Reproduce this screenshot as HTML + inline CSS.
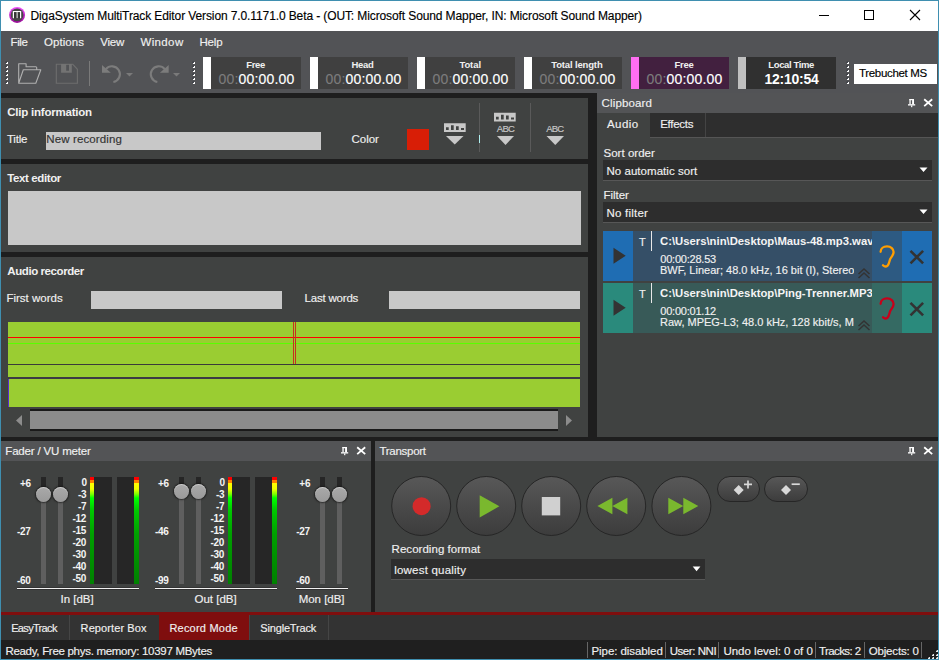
<!DOCTYPE html>
<html><head><meta charset="utf-8">
<style>
*{margin:0;padding:0;box-sizing:border-box}
html,body{width:939px;height:660px;overflow:hidden;background:#1e1e1e;font-family:"Liberation Sans",sans-serif;font-size:12px;color:#f0f0f0}
.a{position:absolute}
.t{position:absolute;white-space:nowrap;line-height:1;-webkit-text-stroke:0.15px currentColor}
.t[style*="bold"]{-webkit-text-stroke:0}
svg{position:absolute;overflow:visible}
</style></head><body>
<!-- window border -->
<div class="a" style="left:0;top:0;width:939px;height:660px;background:#3f8fb0"></div>
<div class="a" style="left:1px;top:1px;width:937px;height:658px;background:#1e1e1e"></div>
<!-- title bar -->
<div class="a" style="left:1px;top:1px;width:937px;height:30px;background:#fff"></div>
<svg style="left:0;top:0" width="939" height="31">
 <defs><linearGradient id="ring" x1="0" y1="0" x2="0" y2="1"><stop offset="0" stop-color="#f050ff"/><stop offset="1" stop-color="#9a0898"/></linearGradient></defs>
 <circle cx="17.1" cy="14.9" r="8" fill="url(#ring)"/>
 <circle cx="17.1" cy="14.9" r="6.4" fill="#464646"/>
 <path d="M13.4 18.2V11.6h7.2v6.6" fill="none" stroke="#fff" stroke-width="1.2"/>
 <rect x="16.2" y="12.2" width="1.8" height="5.9" fill="#a8a8a8"/>
 <rect x="14" y="12.2" width="2.2" height="5.9" fill="#363636"/>
 <rect x="18" y="12.2" width="2" height="5.9" fill="#363636"/>
 <path d="M819 15.5h10" stroke="#000" stroke-width="1"/>
 <rect x="864.5" y="10.5" width="9" height="9" fill="none" stroke="#000" stroke-width="1"/>
 <path d="M910 10l10 10M920 10l-10 10" stroke="#000" stroke-width="1.1"/>
</svg>
<!-- menu + toolbar -->
<div class="a" style="left:1px;top:31px;width:937px;height:62px;background:#525356"></div>
<!-- toolbar widgets -->
<svg style="left:0;top:0" width="939" height="93">
 <g><rect x="6" y="62" width="2" height="2" fill="#fff"/><rect x="5.7" y="61.7" width="1.2" height="1.2" fill="#1a1f2a"/><rect x="6" y="66" width="2" height="2" fill="#fff"/><rect x="5.7" y="65.7" width="1.2" height="1.2" fill="#1a1f2a"/><rect x="6" y="70" width="2" height="2" fill="#fff"/><rect x="5.7" y="69.7" width="1.2" height="1.2" fill="#1a1f2a"/><rect x="6" y="74" width="2" height="2" fill="#fff"/><rect x="5.7" y="73.7" width="1.2" height="1.2" fill="#1a1f2a"/><rect x="6" y="78" width="2" height="2" fill="#fff"/><rect x="5.7" y="77.7" width="1.2" height="1.2" fill="#1a1f2a"/><rect x="6" y="82" width="2" height="2" fill="#fff"/><rect x="5.7" y="81.7" width="1.2" height="1.2" fill="#1a1f2a"/><rect x="193" y="62" width="2" height="2" fill="#fff"/><rect x="192.7" y="61.7" width="1.2" height="1.2" fill="#1a1f2a"/><rect x="193" y="66" width="2" height="2" fill="#fff"/><rect x="192.7" y="65.7" width="1.2" height="1.2" fill="#1a1f2a"/><rect x="193" y="70" width="2" height="2" fill="#fff"/><rect x="192.7" y="69.7" width="1.2" height="1.2" fill="#1a1f2a"/><rect x="193" y="74" width="2" height="2" fill="#fff"/><rect x="192.7" y="73.7" width="1.2" height="1.2" fill="#1a1f2a"/><rect x="193" y="78" width="2" height="2" fill="#fff"/><rect x="192.7" y="77.7" width="1.2" height="1.2" fill="#1a1f2a"/><rect x="193" y="82" width="2" height="2" fill="#fff"/><rect x="192.7" y="81.7" width="1.2" height="1.2" fill="#1a1f2a"/><rect x="847" y="62" width="2" height="2" fill="#fff"/><rect x="846.7" y="61.7" width="1.2" height="1.2" fill="#1a1f2a"/><rect x="847" y="66" width="2" height="2" fill="#fff"/><rect x="846.7" y="65.7" width="1.2" height="1.2" fill="#1a1f2a"/><rect x="847" y="70" width="2" height="2" fill="#fff"/><rect x="846.7" y="69.7" width="1.2" height="1.2" fill="#1a1f2a"/><rect x="847" y="74" width="2" height="2" fill="#fff"/><rect x="846.7" y="73.7" width="1.2" height="1.2" fill="#1a1f2a"/><rect x="847" y="78" width="2" height="2" fill="#fff"/><rect x="846.7" y="77.7" width="1.2" height="1.2" fill="#1a1f2a"/><rect x="847" y="82" width="2" height="2" fill="#fff"/><rect x="846.7" y="81.7" width="1.2" height="1.2" fill="#1a1f2a"/></g>
 <!-- folder -->
 <path d="M18.7 83.2V63.7h7.4v3.1h9.8a0.8 0.8 0 0 1 0.8 0.8v2.2M18.7 83.2l4.6-13.5h17.5l-5 13.5z" fill="none" stroke="#b0b0b0" stroke-width="1.1" stroke-linejoin="round"/>
 <!-- save -->
 <path d="M56.3 64.3h16.5l4.6 5v14H56.3z" fill="none" stroke="#6e6e6e" stroke-width="1.1"/>
 <path fill-rule="evenodd" d="M61.1 64h10.7v8.8H61.1z M66.2 64.6v6.1h2.8v-6.1z" fill="#737373"/>
 <path d="M89.5 61v25" stroke="#7a7a7a" stroke-width="1"/>
 <!-- undo -->
 <path d="M105.95 69.1A7.9 7.9 0 1 1 113.37 81.98" fill="none" stroke="#7c7c7c" stroke-width="2.1"/>
 <path d="M102 65.1v7.7h8.8z" fill="#7c7c7c"/>
 <path d="M126 73h7l-3.5 3.5z" fill="#7a7a7a"/>
 <!-- redo -->
 <path d="M164.75 69.1A7.9 7.9 0 1 0 157.33 81.98" fill="none" stroke="#7c7c7c" stroke-width="2.1"/>
 <path d="M168.7 65.1v7.7h-8.8z" fill="#7c7c7c"/>
 <path d="M173 73h7l-3.5 3.5z" fill="#7a7a7a"/>
</svg>
<!-- time boxes -->
<div class="a" style="left:203px;top:57px;width:8px;height:32px;background:#fff"></div>
<div class="a" style="left:211px;top:57px;width:90px;height:32px;background:#404040"></div>
<div class="a" style="left:310px;top:57px;width:8px;height:32px;background:#fff"></div>
<div class="a" style="left:318px;top:57px;width:90px;height:32px;background:#404040"></div>
<div class="a" style="left:417px;top:57px;width:8px;height:32px;background:#fff"></div>
<div class="a" style="left:425px;top:57px;width:90px;height:32px;background:#404040"></div>
<div class="a" style="left:524px;top:57px;width:8px;height:32px;background:#fff"></div>
<div class="a" style="left:532px;top:57px;width:90px;height:32px;background:#404040"></div>
<div class="a" style="left:631px;top:57px;width:8px;height:32px;background:#ff6ef2"></div>
<div class="a" style="left:639px;top:57px;width:90px;height:32px;background:#42203f"></div>
<div class="a" style="left:738px;top:57px;width:8px;height:32px;background:#c0c0c0"></div>
<div class="a" style="left:746px;top:57px;width:90px;height:32px;background:#303030"></div>
<div class="a" style="left:854px;top:64px;width:83px;height:20px;background:#fff"></div>

<!-- left panels -->
<div class="a" style="left:1px;top:98px;width:587px;height:61px;background:#404241"></div>
<div class="a" style="left:1px;top:164px;width:587px;height:88px;background:#404241"></div>
<div class="a" style="left:1px;top:257px;width:587px;height:180px;background:#404241"></div>
<!-- clip info widgets -->
<div class="a" style="left:46px;top:132px;width:275px;height:18px;background:#c8c8c8"></div>
<div class="a" style="left:407px;top:129px;width:22px;height:21px;background:#d81e06"></div>
<svg style="left:0;top:0" width="600" height="160">
 <g fill="#c8c8c8">
  <path fill-rule="evenodd" transform="translate(0 0)" d="M444 123.3h21.7v8.7H444z M446 127.3v2.7h2.7v-2.7z M451 125.3v4.7h2.7v-4.7z M456 126.2v3.8h2.7v-3.8z M461 128.1v1.9h3v-1.9z"/>
  <path d="M446 136h17.5l-8.75 8.5z"/>
  <path fill-rule="evenodd" transform="translate(50 -10.6)" d="M444 123.3h21.7v8.7H444z M446 127.3v2.7h2.7v-2.7z M451 125.3v4.7h2.7v-4.7z M456 126.2v3.8h2.7v-3.8z M461 128.1v1.9h3v-1.9z"/>
  <path d="M497 136h17l-8.5 9z"/>
  <path d="M546.5 136h17.5l-8.75 9z"/>
 </g>
 <path d="M479.5 103v49M530.5 103v49" stroke="#5a5a5a" stroke-width="1"/>
 <path d="M479.5 135v8" stroke="#b0f0f0" stroke-width="1"/>
</svg>
<!-- text editor -->
<div class="a" style="left:8px;top:191px;width:573px;height:54px;background:#c8c8c8"></div>
<!-- audio recorder -->
<div class="a" style="left:91px;top:291px;width:191px;height:18px;background:#c8c8c8"></div>
<div class="a" style="left:389px;top:291px;width:191px;height:18px;background:#c8c8c8"></div>
<div class="a" style="left:8px;top:322px;width:572px;height:85px;background:#9acd32"></div>
<div class="a" style="left:8px;top:337px;width:572px;height:1px;background:#ff0000"></div>
<div class="a" style="left:8px;top:343px;width:572px;height:1px;background:#58ff00"></div>
<div class="a" style="left:8px;top:364px;width:572px;height:1px;background:#3a3a3a"></div>
<div class="a" style="left:8px;top:377px;width:572px;height:2px;background:#3c3a44"></div>
<div class="a" style="left:8px;top:379px;width:1px;height:28px;background:#5a2ad0"></div>
<div class="a" style="left:293px;top:322px;width:1px;height:42px;background:#c83020"></div>
<div class="a" style="left:295px;top:322px;width:1px;height:42px;background:#c83020"></div>
<!-- scrollbar -->
<div class="a" style="left:30px;top:409px;width:528px;height:22px;background:#1a1a1a"></div>
<div class="a" style="left:30px;top:411px;width:528px;height:18px;background:#8c8c8c"></div>
<svg style="left:0;top:0" width="600" height="440">
 <path d="M16 420.5l6-5.5v11z" fill="#8c8c8c"/>
 <path d="M572 420.5l-6-5.5v11z" fill="#8c8c8c"/>
</svg>

<!-- clipboard -->
<div class="a" style="left:597px;top:93px;width:341px;height:344px;background:#404241"></div>
<div class="a" style="left:597px;top:93px;width:341px;height:20px;background:#535456"></div>
<div class="a" style="left:650px;top:113px;width:288px;height:24px;background:#2e2e2e"></div>
<div class="a" style="left:650px;top:137px;width:288px;height:1px;background:#555"></div>
<div class="a" style="left:705px;top:113px;width:1px;height:24px;background:#444"></div>
<svg style="left:0;top:0" width="939" height="440">
<g fill="#fff" transform="translate(908 99)"><rect x="1.4" y="0" width="4.6" height="1.2"/><rect x="1.4" y="0" width="1.3" height="5.4"/><rect x="4.1" y="0" width="1.9" height="5.4"/><rect x="0" y="5.2" width="7.2" height="1.3"/><rect x="3.1" y="6.4" width="1.2" height="1.8"/></g><path d="M924.2 99.3l8 6.8M932.2 99.3l-8 6.8" stroke="#fff" stroke-width="1.8"/>
</svg>
<div class="a" style="left:603px;top:160px;width:329px;height:20px;background:#2d2d2d"></div>
<div class="a" style="left:603px;top:180px;width:329px;height:1px;background:#575757"></div>
<div class="a" style="left:603px;top:202px;width:329px;height:20px;background:#2d2d2d"></div>
<div class="a" style="left:603px;top:222px;width:329px;height:1px;background:#575757"></div>
<svg style="left:0;top:0" width="939" height="440">
 <path d="M919.5 167.5h8l-4 4.5z M919.5 209.5h8l-4 4.5z" fill="#fff"/>
</svg>
<!-- item 1 -->
<div class="a" style="left:603px;top:231px;width:30px;height:50px;background:#1f6db3"></div>
<div class="a" style="left:633px;top:231px;width:239px;height:50px;background:#354f67"></div>
<div class="a" style="left:872px;top:231px;width:30px;height:50px;background:#2d5a82"></div>
<div class="a" style="left:902px;top:231px;width:30px;height:50px;background:#1f6db3"></div>
<!-- item 2 -->
<div class="a" style="left:603px;top:283px;width:30px;height:50px;background:#2a8a7c"></div>
<div class="a" style="left:633px;top:283px;width:239px;height:50px;background:#385a58"></div>
<div class="a" style="left:872px;top:283px;width:30px;height:50px;background:#356a63"></div>
<div class="a" style="left:902px;top:283px;width:30px;height:50px;background:#2a8a7c"></div>
<div class="a" style="left:651px;top:231px;width:1px;height:20px;background:#e8e8e8"></div>
<div class="a" style="left:651px;top:283px;width:1px;height:20px;background:#e8e8e8"></div>
<div class="t" style="left:660px;top:236.4px;width:212px;overflow:hidden;font-weight:bold;font-size:11.3px;color:#f4f4f4">C:\Users\nin\Desktop\Maus-48.mp3.wav</div>
<div class="t" style="left:660px;top:288.4px;width:212px;overflow:hidden;font-weight:bold;font-size:11.3px;color:#f4f4f4">C:\Users\nin\Desktop\Ping-Trenner.MP3</div>
<div class="t" style="left:660px;top:264.7px;width:194px;overflow:hidden;font-size:11px;color:#f0f0f0">BWF, Linear; 48.0 kHz, 16 bit (I), Stereo</div>
<div class="t" style="left:660px;top:316.7px;width:194px;overflow:hidden;font-size:11px;color:#f0f0f0">Raw, MPEG-L3; 48.0 kHz, 128 kbit/s, Mono</div>
<svg style="left:0;top:0" width="939" height="440">
 <path d="M613.5 247.7v16l12.2-8z M613.5 299.7v16l12.2-8z" fill="#333"/>
 <path d="M910.5 250.8l12.6 12.6M923.1 250.8l-12.6 12.6 M910.5 302.8l12.6 12.6M923.1 302.8l-12.6 12.6" stroke="#333" stroke-width="2.6"/>
 <path d="M858.5 274l5.5-5 5.5 5M858.5 278l5.5-5 5.5 5 M858.5 326l5.5-5 5.5 5M858.5 330l5.5-5 5.5 5" fill="none" stroke="#333" stroke-width="1.5"/>
 <path d="M880.6 251.8C880.6 248.3 883.5 246.4 887 246.4C891 246.4 893.6 249 893.6 252C893.6 255 891.2 257 890.2 259C889.2 261 889.4 264 887.6 265.6C886.2 266.8 884.2 266.4 883 265.2" fill="none" stroke="#ff9e00" stroke-width="2.3" stroke-linecap="round"/>
 <path transform="translate(0 52)" d="M880.6 251.8C880.6 248.3 883.5 246.4 887 246.4C891 246.4 893.6 249 893.6 252C893.6 255 891.2 257 890.2 259C889.2 261 889.4 264 887.6 265.6C886.2 266.8 884.2 266.4 883 265.2" fill="none" stroke="#c8001a" stroke-width="2.3" stroke-linecap="round"/>
</svg>

<!-- fader -->
<div class="a" style="left:1px;top:441px;width:370px;height:171px;background:#404241"></div>
<div class="a" style="left:1px;top:441px;width:370px;height:20px;background:#535456"></div>
<svg style="left:0;top:0" width="939" height="660">
<g fill="#fff" transform="translate(341 447)"><rect x="1.4" y="0" width="4.6" height="1.2"/><rect x="1.4" y="0" width="1.3" height="5.4"/><rect x="4.1" y="0" width="1.9" height="5.4"/><rect x="0" y="5.2" width="7.2" height="1.3"/><rect x="3.1" y="6.4" width="1.2" height="1.8"/></g><path d="M357.2 447.3l8 6.8M365.2 447.3l-8 6.8" stroke="#fff" stroke-width="1.8"/>
</svg>
<div class="a" style="left:41px;top:477px;width:5px;height:107px;background:#5f5f5f;"></div>
<div class="a" style="left:41px;top:477px;width:5px;height:17px;background:#262626;"></div>
<div class="a" style="left:58px;top:477px;width:5px;height:107px;background:#5f5f5f;"></div>
<div class="a" style="left:58px;top:477px;width:5px;height:17px;background:#262626;"></div>
<div class="a" style="left:36.4px;top:487.1px;width:15px;height:15px;border-radius:50%;background:linear-gradient(#a9a9a9,#9a9a9a);box-shadow:0 0 1.5px 1px rgba(20,20,20,0.7), inset 0 1px 0.5px rgba(255,255,255,0.4)"></div>
<div class="a" style="left:53.4px;top:487.1px;width:15px;height:15px;border-radius:50%;background:linear-gradient(#a9a9a9,#9a9a9a);box-shadow:0 0 1.5px 1px rgba(20,20,20,0.7), inset 0 1px 0.5px rgba(255,255,255,0.4)"></div>
<div class="a" style="left:90px;top:477px;width:4px;height:107px;background:linear-gradient(to bottom,#ff0000 0px,#ff0000 3px,#ff8000 3px,#ff8000 6px,#ffff00 6px,#f0ff00 12px,#80ff00 17px,#00ff00 21px,#00c800 33px,#00a000 57px,#008000 107px);"></div>
<div class="a" style="left:94px;top:477px;width:18px;height:107px;background:#262626;"></div>
<div class="a" style="left:117px;top:477px;width:17px;height:107px;background:#262626;"></div>
<div class="a" style="left:134px;top:477px;width:5px;height:107px;background:linear-gradient(to bottom,#ff0000 0px,#ff0000 3px,#ff8000 3px,#ff8000 6px,#ffff00 6px,#f0ff00 12px,#80ff00 17px,#00ff00 21px,#00c800 33px,#00a000 57px,#008000 107px);"></div>
<div class="a" style="left:17px;top:587px;width:122px;height:3px;background:#333;"></div>
<div class="a" style="left:17px;top:588px;width:122px;height:1px;background:#f0f0f0;"></div>
<div class="a" style="left:179px;top:477px;width:5px;height:107px;background:#5f5f5f;"></div>
<div class="a" style="left:179px;top:477px;width:5px;height:14px;background:#262626;"></div>
<div class="a" style="left:196px;top:477px;width:5px;height:107px;background:#5f5f5f;"></div>
<div class="a" style="left:196px;top:477px;width:5px;height:14px;background:#262626;"></div>
<div class="a" style="left:174.4px;top:483.5px;width:15px;height:15px;border-radius:50%;background:linear-gradient(#a9a9a9,#9a9a9a);box-shadow:0 0 1.5px 1px rgba(20,20,20,0.7), inset 0 1px 0.5px rgba(255,255,255,0.4)"></div>
<div class="a" style="left:191.4px;top:483.5px;width:15px;height:15px;border-radius:50%;background:linear-gradient(#a9a9a9,#9a9a9a);box-shadow:0 0 1.5px 1px rgba(20,20,20,0.7), inset 0 1px 0.5px rgba(255,255,255,0.4)"></div>
<div class="a" style="left:228px;top:477px;width:4px;height:107px;background:linear-gradient(to bottom,#ff0000 0px,#ff0000 3px,#ff8000 3px,#ff8000 6px,#ffff00 6px,#f0ff00 12px,#80ff00 17px,#00ff00 21px,#00c800 33px,#00a000 57px,#008000 107px);"></div>
<div class="a" style="left:232px;top:477px;width:18px;height:107px;background:#262626;"></div>
<div class="a" style="left:255px;top:477px;width:17px;height:107px;background:#262626;"></div>
<div class="a" style="left:272px;top:477px;width:5px;height:107px;background:linear-gradient(to bottom,#ff0000 0px,#ff0000 3px,#ff8000 3px,#ff8000 6px,#ffff00 6px,#f0ff00 12px,#80ff00 17px,#00ff00 21px,#00c800 33px,#00a000 57px,#008000 107px);"></div>
<div class="a" style="left:155px;top:587px;width:122px;height:3px;background:#333;"></div>
<div class="a" style="left:155px;top:588px;width:122px;height:1px;background:#f0f0f0;"></div>
<div class="a" style="left:320px;top:477px;width:5px;height:107px;background:#5f5f5f;"></div>
<div class="a" style="left:320px;top:477px;width:5px;height:18px;background:#262626;"></div>
<div class="a" style="left:337px;top:477px;width:5px;height:107px;background:#5f5f5f;"></div>
<div class="a" style="left:337px;top:477px;width:5px;height:18px;background:#262626;"></div>
<div class="a" style="left:315.4px;top:487.1px;width:15px;height:15px;border-radius:50%;background:linear-gradient(#a9a9a9,#9a9a9a);box-shadow:0 0 1.5px 1px rgba(20,20,20,0.7), inset 0 1px 0.5px rgba(255,255,255,0.4)"></div>
<div class="a" style="left:332.4px;top:487.1px;width:15px;height:15px;border-radius:50%;background:linear-gradient(#a9a9a9,#9a9a9a);box-shadow:0 0 1.5px 1px rgba(20,20,20,0.7), inset 0 1px 0.5px rgba(255,255,255,0.4)"></div>
<div class="a" style="left:296px;top:587px;width:52px;height:3px;background:#333;"></div>
<div class="a" style="left:296px;top:588px;width:52px;height:1px;background:#f0f0f0;"></div>
<!-- transport -->
<div class="a" style="left:375px;top:441px;width:563px;height:171px;background:#404241"></div>
<div class="a" style="left:375px;top:441px;width:563px;height:20px;background:#535456"></div>
<svg style="left:0;top:0" width="939" height="660">
<g fill="#fff" transform="translate(908 447)"><rect x="1.4" y="0" width="4.6" height="1.2"/><rect x="1.4" y="0" width="1.3" height="5.4"/><rect x="4.1" y="0" width="1.9" height="5.4"/><rect x="0" y="5.2" width="7.2" height="1.3"/><rect x="3.1" y="6.4" width="1.2" height="1.8"/></g><path d="M924.2 447.3l8 6.8M932.2 447.3l-8 6.8" stroke="#fff" stroke-width="1.8"/>
</svg>
<svg style="left:0;top:0" width="939" height="660">
 <defs>
  <linearGradient id="bg" x1="0" y1="0" x2="0" y2="1"><stop offset="0" stop-color="#585858"/><stop offset="1" stop-color="#3c3c3c"/></linearGradient>
 </defs>
 <g stroke="#262626" stroke-width="1" fill="url(#bg)">
  <circle cx="421.2" cy="506" r="29.5"/>
  <circle cx="486.2" cy="506" r="29.5"/>
  <circle cx="551.2" cy="506" r="29.5"/>
  <circle cx="616.2" cy="506" r="29.5"/>
  <circle cx="681.4" cy="506" r="29.5"/>
  <rect x="717.5" y="476.5" width="42" height="25" rx="12.5"/>
  <rect x="764.5" y="476.5" width="43" height="25" rx="12.5"/>
 </g>
 <circle cx="421.6" cy="506.2" r="9" fill="#d42a2a"/>
 <path d="M479.7 495.2v22.2l19.7-11.1z" fill="#7ab82e"/>
 <rect x="541.8" y="497" width="18.4" height="18.4" fill="#d0d0d0"/>
 <path d="M597.4 506l15-8.3v16.6z M612.4 506l15-8.3v16.6z" fill="#7ab82e"/>
 <path d="M698.3 506l-15-8.3v16.6z M683.3 506l-15-8.3v16.6z" fill="#7ab82e"/>
 <path d="M733.7 490l5-5 5 5-5 5z" fill="#d8d8d8"/>
 <path d="M744 484.4h8M748 480.4v8" stroke="#d8d8d8" stroke-width="1.7"/>
 <path d="M781 490l5-5 5 5-5 5z" fill="#d8d8d8"/>
 <path d="M791.6 484.2h8.2" stroke="#d8d8d8" stroke-width="1.7"/>
</svg>
<div class="a" style="left:391px;top:559px;width:314px;height:20px;background:#2d2d2d"></div>
<div class="a" style="left:391px;top:579px;width:314px;height:1px;background:#575757"></div>
<svg style="left:0;top:0" width="939" height="660">
 <path d="M692.7 566.4h7.7l-3.85 4.8z" fill="#fff"/>
</svg>

<!-- red line & tabs -->
<div class="a" style="left:1px;top:612px;width:937px;height:3px;background:#7f0e0e"></div>
<div class="a" style="left:1px;top:615px;width:937px;height:25px;background:#333333"></div>
<div class="a" style="left:159px;top:615px;width:90px;height:25px;background:#7f0e0e"></div>
<div class="a" style="left:69px;top:615px;width:1px;height:25px;background:#454545"></div>
<div class="a" style="left:249px;top:615px;width:1px;height:25px;background:#454545"></div>
<div class="a" style="left:328px;top:615px;width:1px;height:25px;background:#454545"></div>
<!-- status bar -->
<div class="a" style="left:1px;top:640px;width:937px;height:19px;background:#1f1f1f"></div>
<svg style="left:0;top:0" width="939" height="660">
 <g fill="none" stroke="#666" stroke-width="1">
  <path d="M587.5 642v16M665.5 642v16M718.5 642v16M815.5 642v16M864.5 642v16M921.5 642v16"/>
 </g>
 <g><rect x="936" y="650" width="2" height="2" fill="#e8e8e8"/><rect x="935.6" y="649.6" width="1.2" height="1.2" fill="#101010"/><rect x="932" y="654" width="2" height="2" fill="#e8e8e8"/><rect x="931.6" y="653.6" width="1.2" height="1.2" fill="#101010"/><rect x="936" y="654" width="2" height="2" fill="#e8e8e8"/><rect x="935.6" y="653.6" width="1.2" height="1.2" fill="#101010"/><rect x="928" y="657" width="2" height="2" fill="#e8e8e8"/><rect x="927.6" y="656.6" width="1.2" height="1.2" fill="#101010"/><rect x="932" y="657" width="2" height="2" fill="#e8e8e8"/><rect x="931.6" y="656.6" width="1.2" height="1.2" fill="#101010"/><rect x="936" y="657" width="2" height="2" fill="#e8e8e8"/><rect x="935.6" y="656.6" width="1.2" height="1.2" fill="#101010"/></g>
</svg>

<div class="t" style="left:30.50px;top:10.00px;font-size:12px;color:#000;letter-spacing:-0.109px;">DigaSystem MultiTrack Editor Version 7.0.1171.0 Beta - (OUT: Microsoft Sound Mapper, IN: Microsoft Sound Mapper)</div>
<div class="t" style="left:10.50px;top:37.00px;font-size:11.5px;color:#f0f0f0;letter-spacing:-0.378px;">File</div>
<div class="t" style="left:44.00px;top:37.00px;font-size:11.5px;color:#f0f0f0;letter-spacing:0.070px;">Options</div>
<div class="t" style="left:100.30px;top:37.00px;font-size:11.5px;color:#f0f0f0;letter-spacing:-0.271px;">View</div>
<div class="t" style="left:140.40px;top:37.00px;font-size:11.5px;color:#f0f0f0;letter-spacing:0.381px;">Window</div>
<div class="t" style="left:199.50px;top:37.00px;font-size:11.5px;color:#f0f0f0;letter-spacing:-0.185px;">Help</div>
<div class="t" style="left:246.20px;top:60.00px;font-size:9.5px;color:#f0f0f0;font-weight:bold;letter-spacing:-0.294px;">Free</div>
<div class="t" style="left:351.40px;top:60.00px;font-size:9.5px;color:#f0f0f0;font-weight:bold;letter-spacing:-0.309px;">Head</div>
<div class="t" style="left:459.40px;top:60.00px;font-size:9.5px;color:#f0f0f0;font-weight:bold;letter-spacing:-0.087px;">Total</div>
<div class="t" style="left:551.20px;top:60.00px;font-size:9.5px;color:#f0f0f0;font-weight:bold;letter-spacing:-0.147px;">Total length</div>
<div class="t" style="left:674.60px;top:60.00px;font-size:9.5px;color:#f0f0f0;font-weight:bold;letter-spacing:-0.294px;">Free</div>
<div class="t" style="left:768.30px;top:60.00px;font-size:9.5px;color:#f0f0f0;font-weight:bold;letter-spacing:-0.374px;">Local Time</div>
<div class="t" style="left:218.60px;top:72.00px;font-size:14px;color:#ffffff;letter-spacing:0.163px;"><span style="color:#7c7c7c">00:</span>00:00.00</div>
<div class="t" style="left:325.60px;top:72.00px;font-size:14px;color:#ffffff;letter-spacing:0.163px;"><span style="color:#7c7c7c">00:</span>00:00.00</div>
<div class="t" style="left:432.60px;top:72.00px;font-size:14px;color:#ffffff;letter-spacing:0.163px;"><span style="color:#7c7c7c">00:</span>00:00.00</div>
<div class="t" style="left:539.60px;top:72.00px;font-size:14px;color:#ffffff;letter-spacing:0.163px;"><span style="color:#7c7c7c">00:</span>00:00.00</div>
<div class="t" style="left:646.60px;top:72.00px;font-size:14px;color:#ffffff;letter-spacing:0.163px;"><span style="color:#7c7c7c">00:</span>00:00.00</div>
<div class="t" style="left:764.50px;top:72.00px;font-size:14px;color:#ffffff;font-weight:bold;letter-spacing:-0.251px;">12:10:54</div>
<div class="t" style="left:859.00px;top:68.00px;font-size:11.5px;color:#000;letter-spacing:-0.321px;">Trebuchet MS</div>
<div class="t" style="left:7.30px;top:107.00px;font-size:11.5px;color:#f0f0f0;font-weight:bold;letter-spacing:-0.229px;">Clip information</div>
<div class="t" style="left:7.00px;top:134.00px;font-size:11.5px;color:#f0f0f0;letter-spacing:-0.226px;">Title</div>
<div class="t" style="left:46.30px;top:134.00px;font-size:11.5px;color:#333;letter-spacing:0.113px;">New recording</div>
<div class="t" style="left:351.60px;top:134.00px;font-size:11.5px;color:#f0f0f0;letter-spacing:-0.063px;">Color</div>
<div class="t" style="left:496.80px;top:124.00px;font-size:9.5px;color:#c8c8c8;letter-spacing:-0.736px;">ABC</div>
<div class="t" style="left:546.30px;top:124.00px;font-size:9.5px;color:#c8c8c8;letter-spacing:-0.836px;">ABC</div>
<div class="t" style="left:7.30px;top:173.00px;font-size:11.5px;color:#f0f0f0;font-weight:bold;letter-spacing:-0.396px;">Text editor</div>
<div class="t" style="left:7.30px;top:266.00px;font-size:11.5px;color:#f0f0f0;font-weight:bold;letter-spacing:-0.420px;">Audio recorder</div>
<div class="t" style="left:6.40px;top:293.00px;font-size:11.5px;color:#f0f0f0;letter-spacing:0.012px;">First words</div>
<div class="t" style="left:304.60px;top:293.00px;font-size:11.5px;color:#f0f0f0;letter-spacing:-0.206px;">Last words</div>
<div class="t" style="left:601.60px;top:98.00px;font-size:11.5px;color:#f0f0f0;letter-spacing:0.147px;">Clipboard</div>
<div class="t" style="left:607.00px;top:119.00px;font-size:11.5px;color:#f0f0f0;letter-spacing:0.446px;">Audio</div>
<div class="t" style="left:660.20px;top:119.00px;font-size:11.5px;color:#f0f0f0;letter-spacing:-0.282px;">Effects</div>
<div class="t" style="left:603.50px;top:148.00px;font-size:11.5px;color:#f0f0f0;letter-spacing:0.022px;">Sort order</div>
<div class="t" style="left:606.50px;top:166.00px;font-size:11.5px;color:#f0f0f0;letter-spacing:0.036px;">No automatic sort</div>
<div class="t" style="left:603.50px;top:190.00px;font-size:11.5px;color:#f0f0f0;letter-spacing:-0.045px;">Filter</div>
<div class="t" style="left:606.50px;top:208.00px;font-size:11.5px;color:#f0f0f0;letter-spacing:0.214px;">No filter</div>
<div class="t" style="left:639.00px;top:237.00px;font-size:11px;color:#f0f0f0;">T</div>
<div class="t" style="left:639.00px;top:289.00px;font-size:11px;color:#f0f0f0;">T</div>
<div class="t" style="left:660.30px;top:254.00px;font-size:11px;color:#f0f0f0;letter-spacing:-0.219px;">00:00:28.53</div>
<div class="t" style="left:660.30px;top:306.00px;font-size:11px;color:#f0f0f0;letter-spacing:-0.219px;">00:00:01.12</div>
<div class="t" style="left:5.30px;top:446.00px;font-size:11.5px;color:#f0f0f0;letter-spacing:-0.178px;">Fader / VU meter</div>
<div class="t" style="left:60.50px;top:594.00px;font-size:11.5px;color:#f0f0f0;letter-spacing:-0.025px;">In [dB]</div>
<div class="t" style="left:194.50px;top:594.00px;font-size:11.5px;color:#f0f0f0;">Out [dB]</div>
<div class="t" style="left:298.70px;top:594.00px;font-size:11.5px;color:#f0f0f0;letter-spacing:-0.032px;">Mon [dB]</div>
<div class="t" style="left:379.50px;top:446.00px;font-size:11.5px;color:#f0f0f0;letter-spacing:-0.286px;">Transport</div>
<div class="t" style="left:391.60px;top:544.00px;font-size:11.5px;color:#f0f0f0;letter-spacing:0.033px;">Recording format</div>
<div class="t" style="left:394.20px;top:565.00px;font-size:11.5px;color:#f0f0f0;letter-spacing:0.209px;">lowest quality</div>
<div class="t" style="left:11.20px;top:623.00px;font-size:11px;color:#f0f0f0;letter-spacing:-0.668px;">EasyTrack</div>
<div class="t" style="left:80.60px;top:623.00px;font-size:11px;color:#f0f0f0;letter-spacing:0.099px;">Reporter Box</div>
<div class="t" style="left:169.40px;top:623.00px;font-size:11px;color:#f0f0f0;letter-spacing:0.219px;">Record Mode</div>
<div class="t" style="left:260.30px;top:623.00px;font-size:11px;color:#f0f0f0;letter-spacing:-0.167px;">SingleTrack</div>
<div class="t" style="left:5.40px;top:646.00px;font-size:11.5px;color:#f0f0f0;letter-spacing:-0.292px;">Ready, Free phys. memory: 10397 MBytes</div>
<div class="t" style="left:591.50px;top:646.00px;font-size:11.5px;color:#f0f0f0;letter-spacing:-0.073px;">Pipe: disabled</div>
<div class="t" style="left:669.70px;top:646.00px;font-size:11.5px;color:#f0f0f0;letter-spacing:-0.435px;">User: NNI</div>
<div class="t" style="left:723.40px;top:646.00px;font-size:11.5px;color:#f0f0f0;">Undo level: 0 of 0</div>
<div class="t" style="left:819.00px;top:646.00px;font-size:11.5px;color:#f0f0f0;letter-spacing:-0.595px;">Tracks: 2</div>
<div class="t" style="left:868.70px;top:646.00px;font-size:11.5px;color:#f0f0f0;letter-spacing:-0.164px;">Objects: 0</div>
<div class="t" style="left:19.96px;top:479.00px;font-size:10px;font-weight:bold;color:#f4f4f4;letter-spacing:-0.3px">+6</div>
<div class="t" style="left:16.91px;top:527.00px;font-size:10px;font-weight:bold;color:#f4f4f4;letter-spacing:-0.3px">-27</div>
<div class="t" style="left:16.91px;top:576.00px;font-size:10px;font-weight:bold;color:#f4f4f4;letter-spacing:-0.3px">-60</div>
<div class="t" style="left:81.40px;top:478.00px;font-size:10px;font-weight:bold;color:#f4f4f4;letter-spacing:-0.3px">0</div>
<div class="t" style="left:78.07px;top:490.00px;font-size:10px;font-weight:bold;color:#f4f4f4;letter-spacing:-0.3px">-3</div>
<div class="t" style="left:78.07px;top:502.00px;font-size:10px;font-weight:bold;color:#f4f4f4;letter-spacing:-0.3px">-7</div>
<div class="t" style="left:72.51px;top:514.00px;font-size:10px;font-weight:bold;color:#f4f4f4;letter-spacing:-0.3px">-12</div>
<div class="t" style="left:72.51px;top:526.00px;font-size:10px;font-weight:bold;color:#f4f4f4;letter-spacing:-0.3px">-15</div>
<div class="t" style="left:72.51px;top:538.00px;font-size:10px;font-weight:bold;color:#f4f4f4;letter-spacing:-0.3px">-20</div>
<div class="t" style="left:72.51px;top:550.00px;font-size:10px;font-weight:bold;color:#f4f4f4;letter-spacing:-0.3px">-30</div>
<div class="t" style="left:72.51px;top:562.00px;font-size:10px;font-weight:bold;color:#f4f4f4;letter-spacing:-0.3px">-40</div>
<div class="t" style="left:72.51px;top:574.00px;font-size:10px;font-weight:bold;color:#f4f4f4;letter-spacing:-0.3px">-50</div>
<div class="t" style="left:157.96px;top:479.00px;font-size:10px;font-weight:bold;color:#f4f4f4;letter-spacing:-0.3px">+6</div>
<div class="t" style="left:154.91px;top:527.00px;font-size:10px;font-weight:bold;color:#f4f4f4;letter-spacing:-0.3px">-46</div>
<div class="t" style="left:154.91px;top:576.00px;font-size:10px;font-weight:bold;color:#f4f4f4;letter-spacing:-0.3px">-99</div>
<div class="t" style="left:219.40px;top:478.00px;font-size:10px;font-weight:bold;color:#f4f4f4;letter-spacing:-0.3px">0</div>
<div class="t" style="left:216.07px;top:490.00px;font-size:10px;font-weight:bold;color:#f4f4f4;letter-spacing:-0.3px">-3</div>
<div class="t" style="left:216.07px;top:502.00px;font-size:10px;font-weight:bold;color:#f4f4f4;letter-spacing:-0.3px">-7</div>
<div class="t" style="left:210.51px;top:514.00px;font-size:10px;font-weight:bold;color:#f4f4f4;letter-spacing:-0.3px">-12</div>
<div class="t" style="left:210.51px;top:526.00px;font-size:10px;font-weight:bold;color:#f4f4f4;letter-spacing:-0.3px">-15</div>
<div class="t" style="left:210.51px;top:538.00px;font-size:10px;font-weight:bold;color:#f4f4f4;letter-spacing:-0.3px">-20</div>
<div class="t" style="left:210.51px;top:550.00px;font-size:10px;font-weight:bold;color:#f4f4f4;letter-spacing:-0.3px">-30</div>
<div class="t" style="left:210.51px;top:562.00px;font-size:10px;font-weight:bold;color:#f4f4f4;letter-spacing:-0.3px">-40</div>
<div class="t" style="left:210.51px;top:574.00px;font-size:10px;font-weight:bold;color:#f4f4f4;letter-spacing:-0.3px">-50</div>
<div class="t" style="left:299.36px;top:479.00px;font-size:10px;font-weight:bold;color:#f4f4f4;letter-spacing:-0.3px">+6</div>
<div class="t" style="left:296.31px;top:527.00px;font-size:10px;font-weight:bold;color:#f4f4f4;letter-spacing:-0.3px">-27</div>
<div class="t" style="left:296.31px;top:576.00px;font-size:10px;font-weight:bold;color:#f4f4f4;letter-spacing:-0.3px">-60</div>
</body></html>
